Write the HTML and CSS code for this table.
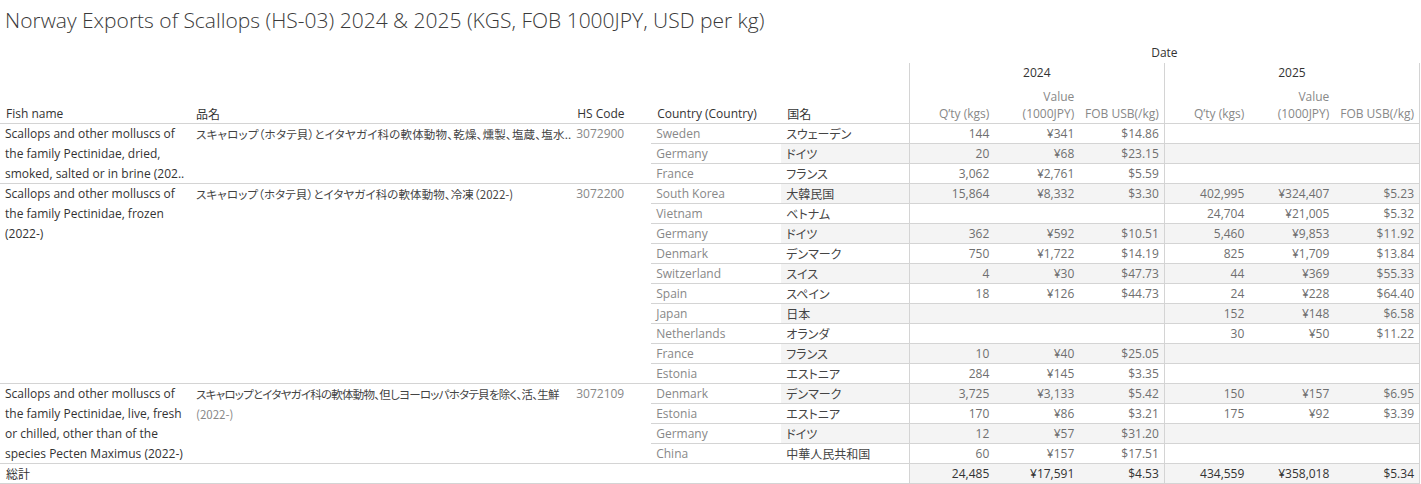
FILE: index.html
```html
<!DOCTYPE html>
<html lang="ja">
<head>
<meta charset="utf-8">
<title>Norway Exports of Scallops</title>
<link rel="stylesheet" href="styles.css">
</head>
<body>
<div class="title">Norway Exports of Scallops (HS-03) 2024 &amp; 2025 (KGS, FOB 1000JPY, USD per kg)</div>
<table class="xt">
  <colgroup>
    <col class="c-fish"><col class="c-jp"><col class="c-hs"><col class="c-ctry"><col class="c-kok">
    <col class="c-m"><col class="c-m"><col class="c-m"><col class="c-m"><col class="c-m"><col class="c-m">
  </colgroup>
  <thead>
    <tr class="h1">
      <th class="lh" rowspan="3">Fish name</th>
      <th class="lh cjk" rowspan="3">品名</th>
      <th class="lh" rowspan="3">HS Code</th>
      <th class="lh" rowspan="3">Country (Country)</th>
      <th class="lh cjk" rowspan="3">国名</th>
      <th class="date" colspan="6">Date</th>
    </tr>
    <tr class="h2">
      <th class="yr ml" colspan="3">2024</th>
      <th class="yr ml mr" colspan="3">2025</th>
    </tr>
    <tr class="h3">
      <th class="mh ml">Q’ty (kgs)</th>
      <th class="mh">Value<br>(1000JPY)</th>
      <th class="mh">FOB USB(/kg)</th>
      <th class="mh ml">Q’ty (kgs)</th>
      <th class="mh">Value<br>(1000JPY)</th>
      <th class="mh mr">FOB USB(/kg)</th>
    </tr>
  </thead>
  <tbody>
    <tr>
      <td class="fish" rowspan="3"><div class="wrap">Scallops and other molluscs of<br>the family Pectinidae, dried,<br>smoked, salted or in brine (202..</div></td>
      <td class="jp jp-wide" rowspan="3"><div class="wrap">スキャロップ（ホタテ貝）とイタヤガイ科の軟体動物、乾燥、燻製、塩蔵、塩水..</div></td>
      <td class="hs" rowspan="3"><div class="wrap">3072900</div></td>
      <td class="ctry">Sweden</td><td class="kok">スウェーデン</td>
      <td class="n ml">144</td><td class="n">¥341</td><td class="n">$14.86</td>
      <td class="n ml"></td><td class="n"></td><td class="n mr"></td>
    </tr>
    <tr class="band">
      <td class="ctry">Germany</td><td class="kok">ドイツ</td>
      <td class="n ml">20</td><td class="n">¥68</td><td class="n">$23.15</td>
      <td class="n ml"></td><td class="n"></td><td class="n mr"></td>
    </tr>
    <tr>
      <td class="ctry">France</td><td class="kok">フランス</td>
      <td class="n ml">3,062</td><td class="n">¥2,761</td><td class="n">$5.59</td>
      <td class="n ml"></td><td class="n"></td><td class="n mr"></td>
    </tr>

    <tr class="band">
      <td class="fish" rowspan="10"><div class="wrap">Scallops and other molluscs of<br>the family Pectinidae, frozen<br>(2022-)</div></td>
      <td class="jp jp-mid" rowspan="10"><div class="wrap">スキャロップ（ホタテ貝）とイタヤガイ科の軟体動物、冷凍（<span class="lat">2022-</span>)</div></td>
      <td class="hs" rowspan="10"><div class="wrap">3072200</div></td>
      <td class="ctry">South Korea</td><td class="kok">大韓民国</td>
      <td class="n ml">15,864</td><td class="n">¥8,332</td><td class="n">$3.30</td>
      <td class="n ml">402,995</td><td class="n">¥324,407</td><td class="n mr">$5.23</td>
    </tr>
    <tr>
      <td class="ctry">Vietnam</td><td class="kok">ベトナム</td>
      <td class="n ml"></td><td class="n"></td><td class="n"></td>
      <td class="n ml">24,704</td><td class="n">¥21,005</td><td class="n mr">$5.32</td>
    </tr>
    <tr class="band">
      <td class="ctry">Germany</td><td class="kok">ドイツ</td>
      <td class="n ml">362</td><td class="n">¥592</td><td class="n">$10.51</td>
      <td class="n ml">5,460</td><td class="n">¥9,853</td><td class="n mr">$11.92</td>
    </tr>
    <tr>
      <td class="ctry">Denmark</td><td class="kok">デンマーク</td>
      <td class="n ml">750</td><td class="n">¥1,722</td><td class="n">$14.19</td>
      <td class="n ml">825</td><td class="n">¥1,709</td><td class="n mr">$13.84</td>
    </tr>
    <tr class="band">
      <td class="ctry">Switzerland</td><td class="kok">スイス</td>
      <td class="n ml">4</td><td class="n">¥30</td><td class="n">$47.73</td>
      <td class="n ml">44</td><td class="n">¥369</td><td class="n mr">$55.33</td>
    </tr>
    <tr>
      <td class="ctry">Spain</td><td class="kok">スペイン</td>
      <td class="n ml">18</td><td class="n">¥126</td><td class="n">$44.73</td>
      <td class="n ml">24</td><td class="n">¥228</td><td class="n mr">$64.40</td>
    </tr>
    <tr class="band">
      <td class="ctry">Japan</td><td class="kok">日本</td>
      <td class="n ml"></td><td class="n"></td><td class="n"></td>
      <td class="n ml">152</td><td class="n">¥148</td><td class="n mr">$6.58</td>
    </tr>
    <tr>
      <td class="ctry">Netherlands</td><td class="kok">オランダ</td>
      <td class="n ml"></td><td class="n"></td><td class="n"></td>
      <td class="n ml">30</td><td class="n">¥50</td><td class="n mr">$11.22</td>
    </tr>
    <tr class="band">
      <td class="ctry">France</td><td class="kok">フランス</td>
      <td class="n ml">10</td><td class="n">¥40</td><td class="n">$25.05</td>
      <td class="n ml"></td><td class="n"></td><td class="n mr"></td>
    </tr>
    <tr>
      <td class="ctry">Estonia</td><td class="kok">エストニア</td>
      <td class="n ml">284</td><td class="n">¥145</td><td class="n">$3.35</td>
      <td class="n ml"></td><td class="n"></td><td class="n mr"></td>
    </tr>

    <tr class="band">
      <td class="fish" rowspan="4"><div class="wrap">Scallops and other molluscs of<br>the family Pectinidae, live, fresh<br>or chilled, other than of the<br>species Pecten Maximus (2022-)</div></td>
      <td class="jp jp-tight" rowspan="4"><div class="wrap">スキャロップとイタヤガイ科の軟体動物、但しヨーロッパホタテ貝を除く、活、生鮮<br><span class="grey">(2022-)</span></div></td>
      <td class="hs" rowspan="4"><div class="wrap">3072109</div></td>
      <td class="ctry">Denmark</td><td class="kok">デンマーク</td>
      <td class="n ml">3,725</td><td class="n">¥3,133</td><td class="n">$5.42</td>
      <td class="n ml">150</td><td class="n">¥157</td><td class="n mr">$6.95</td>
    </tr>
    <tr>
      <td class="ctry">Estonia</td><td class="kok">エストニア</td>
      <td class="n ml">170</td><td class="n">¥86</td><td class="n">$3.21</td>
      <td class="n ml">175</td><td class="n">¥92</td><td class="n mr">$3.39</td>
    </tr>
    <tr class="band">
      <td class="ctry">Germany</td><td class="kok">ドイツ</td>
      <td class="n ml">12</td><td class="n">¥57</td><td class="n">$31.20</td>
      <td class="n ml"></td><td class="n"></td><td class="n mr"></td>
    </tr>
    <tr>
      <td class="ctry">China</td><td class="kok">中華人民共和国</td>
      <td class="n ml">60</td><td class="n">¥157</td><td class="n">$17.51</td>
      <td class="n ml"></td><td class="n"></td><td class="n mr"></td>
    </tr>

    <tr class="total">
      <td class="tot" colspan="5">総計</td>
      <td class="n ml">24,485</td><td class="n">¥17,591</td><td class="n">$4.53</td>
      <td class="n ml">434,559</td><td class="n">¥358,018</td><td class="n mr">$5.34</td>
    </tr>
  </tbody>
</table>
</body>
</html>
```

FILE: styles.css
```css
html, body {
  margin: 0;
  padding: 0;
  background: #ffffff;
}

body {
  font-family: "Open Sans", "Noto Sans CJK JP", sans-serif;
  color: #333333;
}

.title {
  height: 42px;
  line-height: 40px;
  padding-left: 5px;
  font-size: 21px;
  font-weight: 300;
  color: #3a3a3a;
  white-space: nowrap;
}

.xt {
  border-collapse: collapse;
  table-layout: fixed;
  width: 1420px;
  font-size: 12px;
}

.c-fish { width: 190px; }
.c-jp { width: 381px; }
.c-hs { width: 80px; }
.c-ctry { width: 130px; }
.c-kok { width: 128px; }
.c-m { width: 85px; }

.xt th, .xt td {
  padding: 0 5px;
  white-space: nowrap;
  overflow: hidden;
  font-weight: normal;
}

.cjk,
.jp,
.kok,
.tot {
  font-family: "Noto Sans CJK JP", sans-serif;
  font-feature-settings: "palt";
}

.xt th.lh {
  text-align: left;
  vertical-align: bottom;
  padding-left: 6px;
  padding-bottom: 1px;
  line-height: 17px;
  color: #333333;
  border-bottom: 1px solid #d4d4d4;
}

.h1 th.date {
  height: 21px;
  text-align: center;
  vertical-align: bottom;
  color: #333333;
  line-height: 20px;
}

.h2 th.yr {
  height: 20px;
  text-align: center;
  color: #333333;
  line-height: 20px;
}

.h3 th.mh {
  height: 39px;
  text-align: right;
  vertical-align: bottom;
  line-height: 17px;
  padding-bottom: 1px;
  color: #888888;
  border-bottom: 1px solid #d4d4d4;
}

.ml { border-left: 1px solid #d4d4d4; }
.mr { border-right: 1px solid #d4d4d4; }

.xt tbody td {
  height: 19px;
  line-height: 17px;
  border-bottom: 1px solid #d4d4d4;
  vertical-align: middle;
}

.xt tbody td.fish,
.xt tbody td.jp,
.xt tbody td.hs {
  vertical-align: top;
  padding-top: 0;
}

.wrap {
  line-height: 20px;
  margin-bottom: -3px;
}

.fish {
  padding-left: 6px;
  color: #333333;
}

.xt tbody td.jp {
  color: #444444;
  font-size: 11.5px;
  padding-left: 6px;
  padding-right: 2px;
}

.xt tbody td.jp-wide {
  letter-spacing: 0.2px;
}

.xt tbody td.jp-mid {
  letter-spacing: 0.1px;
}

.xt tbody td.jp-tight {
  letter-spacing: -0.75px;
}

.lat {
  letter-spacing: 0;
}

.grey {
  color: #888888;
  letter-spacing: 0;
}

.hs {
  color: #888888;
}

.ctry {
  color: #888888;
}

.kok {
  color: #444444;
}

.n {
  text-align: right;
  color: #6f6f6f;
}

.band .kok,
.band .n {
  background: #f4f4f4;
}

.total .tot {
  padding-left: 6px;
  color: #333333;
}

.total .n {
  background: #f4f4f4;
  color: #333333;
}
```
